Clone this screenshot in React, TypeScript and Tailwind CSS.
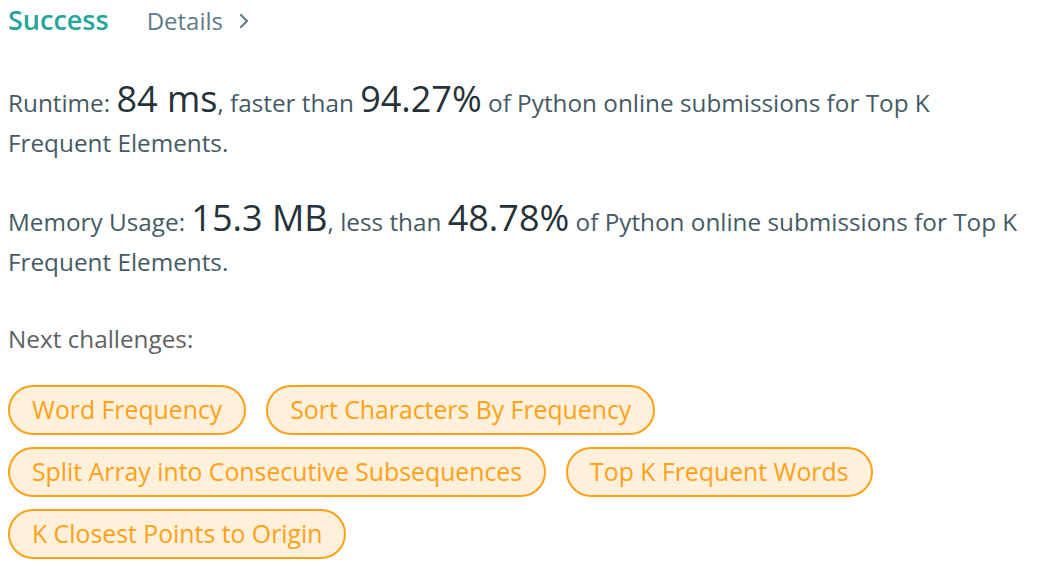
import { ChevronRight } from "lucide-react";

const challenges = [
  ["Word Frequency", "Sort Characters By Frequency"],
  ["Split Array into Consecutive Subsequences", "Top K Frequent Words"],
  ["K Closest Points to Origin"],
];

export default function App() {
  return (
    <div
      className="w-[1063px] h-[572px] bg-white px-2 pt-[2px] text-[#455a64]"
      style={{ fontFamily: '"Open Sans", "Noto Sans", sans-serif' }}
    >
      {/* header */}
      <div className="flex items-baseline gap-[38px] leading-[36px]">
        <span className="text-[27px] font-semibold text-[#26a69a]">Success</span>
        <span className="inline-flex items-center text-[24px] text-[#607d8b]">
          Details
          <ChevronRight className="ml-[9px] h-6 w-6" strokeWidth={2.2} />
        </span>
      </div>

      <p className="mt-[40px] text-[24.3px] leading-[40px]">
        Runtime: <span className="text-[36px] text-[#263238]">84 ms</span>, faster than{" "}
        <span className="text-[36px] text-[#263238]">94.27%</span> of Python online submissions for Top K
        <br />
        Frequent Elements.
      </p>

      <p className="mt-[35px] text-[24.3px] leading-[40px]">
        Memory Usage: <span className="text-[36px] text-[#263238]">15.3 MB</span>, less than{" "}
        <span className="text-[36px] text-[#263238]">48.78%</span> of Python online submissions for Top K
        <br />
        Frequent Elements.
      </p>

      <p className="mt-[37px] text-[24.3px] leading-[40px] text-[#616161]">Next challenges:</p>

      <div className="mt-[26px] flex flex-col gap-3">
        {challenges.map((row, i) => (
          <div key={i} className="flex gap-5">
            {row.map((c) => (
              <span
                key={c}
                className="h-[50px] flex items-center rounded-full border-2 border-[#ffa116] bg-[#fff0dc] px-[22px] text-[24.8px] text-[#ffa116]"
              >
                {c}
              </span>
            ))}
          </div>
        ))}
      </div>
    </div>
  );
}
